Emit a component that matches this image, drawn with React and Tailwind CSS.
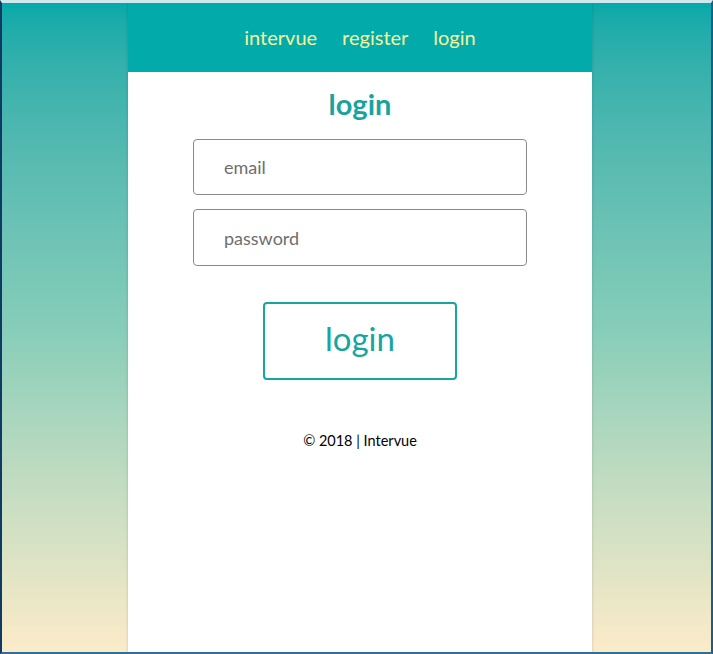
const navLinks = ['intervue', 'register', 'login']

export default function App() {
  return (
    <div className="h-[654px] w-[713px] overflow-hidden border-l-2 border-r-2 border-b-2 border-t-[3px] border-l-[#0f3b63] border-r-[#1e5a8a] border-b-[#2f6f9a] border-t-[#cfe9ef] bg-gradient-to-b from-[#03a9a9] via-[#86cdb9] to-[#fcebc9] font-['Lato','Open_Sans',sans-serif]">
      <div className="flex h-full w-[464px] flex-col bg-white shadow-[0_0_3px_rgba(0,0,0,0.18)] ml-[126px]">
        <nav className="flex h-[69px] shrink-0 items-center justify-center gap-[25px] bg-[#02aaaa] pb-[1px] text-[20px] text-[#f6f59c]">
          {navLinks.map((l) => (
            <a key={l} href="#" className="leading-none">
              {l}
            </a>
          ))}
        </nav>
        <h1 className="mt-[16px] text-center text-[29px] font-bold leading-[32px] text-[#19a3a0]">login</h1>
        <form className="mt-[19px] flex flex-col items-center gap-[14px]">
          <input
            placeholder="email"
            className="h-[56px] w-[334px] rounded-[4px] border border-[#8a8a8a] pl-[30px] text-[18px] text-[#666] placeholder:text-[#6e6e6e] outline-none"
          />
          <input
            type="password"
            placeholder="password"
            className="h-[57px] w-[334px] rounded-[4px] border border-[#8a8a8a] pl-[30px] text-[18px] text-[#666] placeholder:text-[#6e6e6e] outline-none"
          />
          <button
            type="button"
            className="mt-[22px] h-[78px] w-[194px] rounded-[4px] border-2 border-[#17a5a2] bg-white pb-[5px] text-[33px] text-[#17a5a2]"
          >
            login
          </button>
        </form>
        <p className="mt-[50px] text-center text-[14.5px] text-black">© 2018 | Intervue</p>
      </div>
    </div>
  )
}
